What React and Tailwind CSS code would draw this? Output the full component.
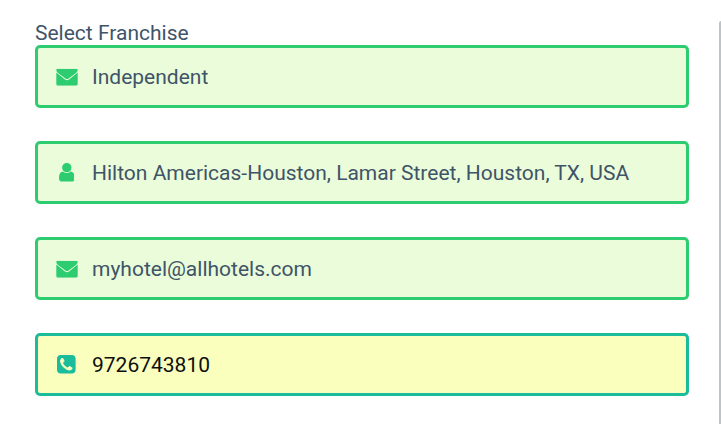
const icons = {
  envelope: {
    box: '0 0 22 17',
    size: 'w-[22px] h-[17px] translate-y-[0.7px]',
    d: 'M1.7 0H20.3Q21.7 0 21.7 1.4C21.7 2.6 21 3.5 20 4.2L12.6 9.8Q11 11 9.4 9.8L2 4.2C1 3.5 0.3 2.6 0.3 1.4Q0.3 0 1.7 0ZM0.3 3.8L9 10.7Q11 12.3 13 10.7L21.7 3.8V15.3Q21.7 17 20 17H2Q0.3 17 0.3 15.3Z',
  },
  user: {
    box: '0 128 1280 1536',
    size: 'w-[15.6px] h-[18.6px]',
    d: 'M1280 1399q0 109-62.5 187t-150.5 78h-854q-88 0-150.5-78t-62.5-187q0-85 8.5-160.5t31.5-152 58.5-131 94-89 134.5-34.5q131 128 313 128t313-128q76 0 134.5 34.5t94 89 58.5 131 31.5 152 8.5 160.5zm-256-887q0 159-112.5 271.5t-271.5 112.5-271.5-112.5-112.5-271.5 112.5-271.5 271.5-112.5 271.5 112.5 112.5 271.5z',
  },
  phone: {
    box: '0 128 1536 1536',
    size: 'w-[18.6px] h-[18.6px]',
    d: 'M1280 1193q0-11-2-16t-18-16.5-40.5-25-47.5-26.5-45.5-25-28.5-15q-5-3-19-13t-25-15-21-5q-15 0-36.5 20.5t-39.5 45-38.5 45-33.5 20.5q-7 0-16.5-3.5t-15.5-6.5-17-9.5-14-8.5q-99-55-170-126.5t-127-170.5q-2-3-8.5-14t-9.5-17-6.5-15.5-3.5-16.5q0-13 20.5-33.5t45-38.5 45-39.5 20.5-36.5q0-10-5-21t-15-25-13-19q-3-6-15-28.5t-25-45.5-26.5-47.5-25-40.5-16.5-18-16-2q-48 0-101 22-46 21-80 94.5t-34 130.5q0 16 2.5 34t5 30.5 9 33 10 29.5 12.5 33 11 30q60 164 216.5 320.5t320.5 216.5q6 2 30 11t33 12.5 29.5 10 33 9 30.5 5 34 2.5q57 0 130.5-34t94.5-80q22-53 22-101zm256-777v960q0 119-84.5 203.5t-203.5 84.5h-960q-119 0-203.5-84.5t-84.5-203.5v-960q0-119 84.5-203.5t203.5-84.5h960q119 0 203.5 84.5t84.5 203.5z',
  },
};

const valid = {
  field: 'border-[#2ecc71] bg-[#eafcd9]',
  icon: 'text-[#2ecc71]',
  text: 'text-[#3f5468]',
};
const focused = {
  field: 'border-[#1abc9c] bg-[#faffbd]',
  icon: 'text-[#1abc9c]',
  text: 'text-[#0f0f0f]',
};

const fields = [
  { icon: 'envelope', value: 'Independent', tone: valid },
  { icon: 'user', value: 'Hilton Americas-Houston, Lamar Street, Houston, TX, USA', tone: valid },
  { icon: 'envelope', value: 'myhotel@allhotels.com', tone: valid },
  { icon: 'phone', value: '9726743810', tone: focused },
];

function Field({ icon, value, tone }) {
  const { box, size, d } = icons[icon];
  return (
    <div className={`flex h-[63px] items-center rounded-[5px] border-3 ${tone.field}`}>
      <span className={`flex w-[54px] justify-center pl-[3px] ${tone.icon}`}>
        <svg viewBox={box} className={size} preserveAspectRatio="none" fill="currentColor">
          <path d={d} />
        </svg>
      </span>
      <span className={`leading-6 whitespace-nowrap ${tone.text}`}>{value}</span>
    </div>
  );
}

export default function App() {
  return (
    <div className="flex h-[424px] w-[721px] justify-between overflow-hidden bg-white font-['Roboto',sans-serif] text-[21px]">
      <div className="ml-[35px] w-[654px] pt-[21px]">
        <div className="h-6 leading-6 text-[#3f5468]">Select Franchise</div>
        <div className="flex flex-col gap-[33px]">
          {fields.map((f) => (
            <Field key={f.value} {...f} />
          ))}
        </div>
      </div>
      <div className="mt-[21px] w-[2px] rounded-tl-[2px] bg-[#bdc3c7]" />
    </div>
  );
}
